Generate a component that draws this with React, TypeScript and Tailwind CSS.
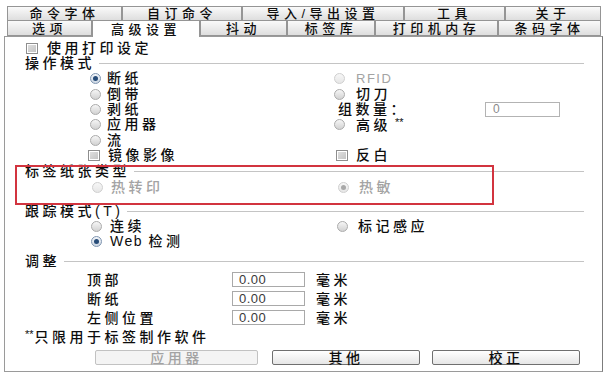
const FONT = "font-['Liberation_Sans','Noto_Sans_CJK_SC',sans-serif]";

const topTabs = [
  { label: "命令字体", w: "w-[115px]" },
  { label: "自订命令", w: "w-[120px]" },
  { label: "导入/导出设置", w: "w-[162px]" },
  { label: "工具", w: "w-[101px]" },
  { label: "关于", w: "w-[96px]" },
];

const bottomTabs = [
  { label: "选项", w: "w-[85px]" },
  { label: "高级设置", w: "w-[108px]", active: true },
  { label: "抖动", w: "w-[87px]" },
  { label: "标签库", w: "w-[88px]" },
  { label: "打印机内存", w: "w-[123px]" },
  { label: "条码字体", w: "w-[103px]" },
];

function Radio({ checked = false, disabled = false }: { checked?: boolean; disabled?: boolean }) {
  return (
    <span
      className={`flex items-center justify-center w-[11px] h-[11px] rounded-full border shrink-0 ${
        disabled
          ? "border-[#cfcfcf] bg-linear-to-b from-[#f7f7f7] to-[#e6e6e6]"
          : checked
          ? "border-[#7f95b0] bg-linear-to-b from-[#f2f5f9] to-[#cdd7e3]"
          : "border-[#ababab] bg-linear-to-b from-[#f6f6f6] to-[#d2d2d2]"
      }`}
    >
      {checked && (
        <span className={`w-[5px] h-[5px] rounded-full ${disabled ? "bg-[#a8a8a8]" : "bg-[#274c78]"}`} />
      )}
    </span>
  );
}

function Check() {
  return (
    <span className="flex w-[12px] h-[11px] border border-[#8e8e8e] p-px shrink-0">
      <span className="flex-1 bg-linear-to-br from-[#dedede] to-[#c4c4c4]" />
    </span>
  );
}

function Txt({ children, disabled = false }: { children: React.ReactNode; disabled?: boolean }) {
  return (
    <span className={`text-[14px] leading-[15px] tracking-[3.5px] font-medium whitespace-nowrap ${disabled ? "text-[#a3a3a3]" : "text-[#0d0d0d]"}`}>
      {children}
    </span>
  );
}

function Stars() {
  return <span className="self-start text-[11px] leading-[10px] text-[#0d0d0d]">**</span>;
}

function GroupHeader({ title, h = "h-[16px]" }: { title: string; h?: string }) {
  return (
    <div className={`flex items-center ${h}`}>
      <Txt>{title}</Txt>
      <div className="flex-1 h-px bg-[#c4c4c4] ml-1" />
    </div>
  );
}

function Field({ label }: { label: string }) {
  return (
    <div className="flex items-center h-[17px]">
      <div className="w-[207px] pl-[62px]">
        <Txt>{label}</Txt>
      </div>
      <div className="flex items-center w-[73px] h-[15px] border border-[#a9a9a9] pl-[6px] text-[13px] text-[#3a3a3a] tracking-[0.5px]">
        0.00
      </div>
      <div className="ml-[11px]">
        <Txt>毫米</Txt>
      </div>
    </div>
  );
}

export default function App() {
  return (
    <div className={`relative w-[612px] h-[378px] bg-white overflow-hidden pl-[4px] pt-[6px] ${FONT}`}>
      {/* tab rows */}
      <div className="flex ml-[3px] h-[14px]">
        {topTabs.map((t) => (
          <div
            key={t.label}
            className={`${t.w} flex items-center justify-center border border-b-0 border-[#959595] bg-linear-to-b from-[#fafafa] to-[#dedede] text-[13px] leading-[13px] tracking-[4.5px] font-medium text-[#0d0d0d]`}
          >
            {t.label}
          </div>
        ))}
      </div>
      <div className="flex ml-[3px] h-[16px] items-end">
        {bottomTabs.map((t) =>
          t.active ? (
            <div
              key={t.label}
              className={`${t.w} relative z-10 h-[17px] -mb-px flex items-center justify-center border border-b-0 border-[#959595] bg-white text-[13px] leading-[13px] tracking-[4.5px] font-medium text-[#0d0d0d]`}
            >
              {t.label}
            </div>
          ) : (
            <div
              key={t.label}
              className={`${t.w} h-[16px] flex items-center justify-center border border-[#959595] bg-linear-to-b from-[#fafafa] to-[#dedede] text-[13px] leading-[13px] tracking-[4.5px] font-medium text-[#0d0d0d]`}
            >
              {t.label}
            </div>
          )
        )}
      </div>

      {/* panel */}
      <div className="w-[599px] border border-[#9a9a9a] border-r-[#7c7c7c] pl-[20px] pr-[18px] pt-[3px] pb-[6px] flex flex-col">
        <div className="flex items-center h-[16px] gap-[9px] pl-[1px]">
          <Check />
          <Txt>使用打印设定</Txt>
        </div>

        <GroupHeader title="操作模式" h="h-[15px]" />

        <div className="grid grid-cols-[246px_1fr] auto-rows-[15.4px] ml-[63px]">
          <div className="flex items-center gap-[6px] pl-[2px]"><Radio checked /><Txt>断纸</Txt></div>
          <div className="flex items-center gap-[11px]"><Radio disabled /><span className="text-[13px] tracking-[1.5px] text-[#a3a3a3]">RFID</span></div>

          <div className="flex items-center gap-[6px] pl-[2px]"><Radio /><Txt>倒带</Txt></div>
          <div className="flex items-center gap-[11px]"><Radio /><Txt>切刀</Txt></div>

          <div className="flex items-center gap-[6px] pl-[2px]"><Radio /><Txt>剥纸</Txt></div>
          <div className="flex items-center">
            <div className="w-[151px] pl-[4px]"><Txt>组数量：</Txt></div>
            <div className="flex items-center w-[75px] h-[15px] border border-[#b3b3b3] pl-[7px] text-[12px] text-[#8a8a8a]">0</div>
          </div>

          <div className="flex items-center gap-[6px] pl-[2px]"><Radio /><Txt>应用器</Txt></div>
          <div className="flex items-center">
            <Radio />
            <span className="ml-[11px]"><Txt>高级</Txt></span>
            <span className="ml-[4px] flex self-stretch"><Stars /></span>
          </div>

          <div className="flex items-center gap-[6px] pl-[2px]"><Radio /><Txt>流</Txt></div>
          <div />

          <div className="flex items-center gap-[8px]"><Check /><Txt>镜像影像</Txt></div>
          <div className="flex items-center gap-[8px] pl-[2px]"><Check /><Txt>反白</Txt></div>
        </div>

        <GroupHeader title="标签纸张类型" />
        <div className="grid grid-cols-[246px_1fr] h-[17px] ml-[63px] items-center">
          <div className="flex items-center gap-[8px] pl-[4px]"><Radio disabled /><Txt disabled>热转印</Txt></div>
          <div className="flex items-center gap-[10px] pl-[4px]"><Radio checked disabled /><Txt disabled>热敏</Txt></div>
        </div>

        <div className="h-[7px]" />
        <GroupHeader title="跟踪模式(T)" />
        <div className="grid grid-cols-[246px_1fr] auto-rows-[15px] ml-[63px]">
          <div className="flex items-center gap-[8px] pl-[3px]"><Radio /><Txt>连续</Txt></div>
          <div className="flex items-center gap-[10px] pl-[3px]"><Radio /><Txt>标记感应</Txt></div>
          <div className="flex items-center gap-[8px] pl-[3px]"><Radio checked /><span className="text-[14px] leading-[15px] tracking-[1.5px] font-medium text-[#0d0d0d] whitespace-nowrap">Web <span className="tracking-[3.5px]">检测</span></span></div>
        </div>

        <div className="h-[4px]" />
        <GroupHeader title="调整" />
        <div className="flex flex-col gap-[2px] mt-[2px]">
          <Field label="顶部" />
          <Field label="断纸" />
          <Field label="左侧位置" />
        </div>

        <div className="flex items-center h-[16px] mt-[3px]">
          <span className="flex self-stretch mr-[1px]"><Stars /></span>
          <Txt>只限用于标签制作软件</Txt>
        </div>

        <div className="flex items-center h-[15px] mt-[5px] ml-[70px] gap-[14px]">
          <div className="w-[163px] h-[15px] flex items-center justify-center border border-[#c2c2c2] rounded-[2px] bg-[#f4f4f4] text-[14px] leading-[14px] tracking-[3.5px] font-medium text-[#a3a3a3]">
            应用器
          </div>
          <div className="w-[148px] h-[15px] flex items-center justify-center border border-[#6f6f6f] rounded-[2px] bg-linear-to-b from-white to-[#e6e6e6] text-[14px] leading-[14px] tracking-[3.5px] font-medium text-[#0d0d0d]">
            其他
          </div>
          <div className="w-[148px] h-[15px] flex items-center justify-center border border-[#6f6f6f] rounded-[2px] bg-linear-to-b from-white to-[#e6e6e6] text-[14px] leading-[14px] tracking-[3.5px] font-medium text-[#0d0d0d] -ml-[2px]">
            校正
          </div>
        </div>
      </div>

      {/* red annotation box */}
      <div className="absolute left-[15px] top-[165px] w-[479px] h-[40px] border-2 border-[#d2343f] pointer-events-none" />
    </div>
  );
}
